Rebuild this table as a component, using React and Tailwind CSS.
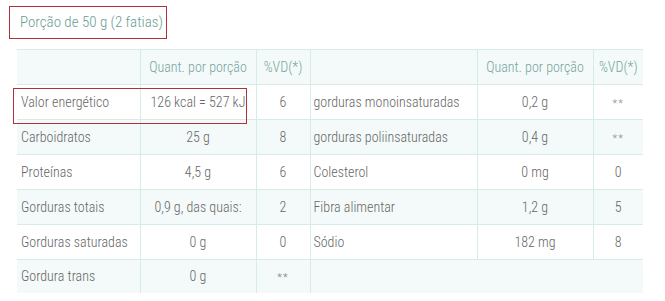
const rows = [
  ['Valor energético', '126 kcal = 527 kJ', '6', 'gorduras monoinsaturadas', '0,2 g', '**'],
  ['Carboidratos', '25 g', '8', 'gorduras poliinsaturadas', '0,4 g', '**'],
  ['Proteínas', '4,5 g', '6', 'Colesterol', '0 mg', '0'],
  ['Gorduras totais', '0,9 g, das quais:', '2', 'Fibra alimentar', '1,2 g', '5'],
  ['Gorduras saturadas', '0 g', '0', 'Sódio', '182 mg', '8'],
];

function Val({ v }) {
  if (v === '**') return <span className="text-[11px] text-[#8f8f8f] tracking-[1px]">**</span>;
  return v;
}

export default function App() {
  return (
    <div className="w-[665px] h-[301px] bg-white font-['Roboto',sans-serif] font-stretch-condensed font-light overflow-hidden">
      <div className="pt-[6px] pl-[9px] h-[39px]">
        <div className="flex items-center h-[33px] w-[158px] border border-[#b2303c] pl-[10px] text-[15px] text-[#6b9c95] whitespace-nowrap">
          Porção de 50 g (2 fatias)
        </div>
      </div>

      <div className="relative ml-[17px] mt-[10px] w-[626px]">
        <table className="w-[626px] table-fixed border-collapse text-[14px] text-[#666]">
          <colgroup>
            <col className="w-[123px]" />
            <col className="w-[116px]" />
            <col className="w-[54px]" />
            <col className="w-[167px]" />
            <col className="w-[116px]" />
            <col className="w-[50px]" />
          </colgroup>
          <thead>
            <tr className="h-[35px] bg-[#f4faf9] border-t border-[#d7ebe7] text-[#78a49e]">
              <th className="font-light"></th>
              <th className="font-light text-center border-l border-[#d7ebe7]">Quant. por porção</th>
              <th className="font-light text-center border-l border-[#d7ebe7]">%VD(*)</th>
              <th className="font-light border-l border-[#d7ebe7]"></th>
              <th className="font-light text-center border-l border-[#d7ebe7]">Quant. por porção</th>
              <th className="font-light text-center border-l border-[#d7ebe7]">%VD(*)</th>
            </tr>
          </thead>
          <tbody>
            {rows.map((r, i) => (
              <tr key={i} className={`h-[35px] border-t border-[#d7ebe7] ${i % 2 === 0 ? 'bg-white' : 'bg-[#f4faf9]'}`}>
                <td className="pl-[4px] whitespace-nowrap">{r[0]}</td>
                <td className="text-center border-l border-[#d7ebe7] whitespace-nowrap">{r[1]}</td>
                <td className="text-center border-l border-[#d7ebe7]"><Val v={r[2]} /></td>
                <td className="pl-[3px] border-l border-[#d7ebe7] whitespace-nowrap">{r[3]}</td>
                <td className="text-center border-l border-[#d7ebe7]">{r[4]}</td>
                <td className="text-center border-l border-[#d7ebe7]"><Val v={r[5]} /></td>
              </tr>
            ))}
            <tr className="h-[33px] border-t border-[#d7ebe7] bg-[#f4faf9]">
              <td className="pl-[4px] whitespace-nowrap">Gordura trans</td>
              <td className="text-center border-l border-[#d7ebe7]">0 g</td>
              <td className="text-center border-l border-[#d7ebe7]"><span className="text-[11px] text-[#7f7f7f] tracking-[1px]">**</span></td>
              <td colSpan={3} className="border-l border-[#d7ebe7]"></td>
            </tr>
          </tbody>
        </table>
        <div className="absolute left-[-4px] top-[39px] w-[234px] h-[36px] border border-[#b2303c] pointer-events-none"></div>
      </div>
    </div>
  );
}
